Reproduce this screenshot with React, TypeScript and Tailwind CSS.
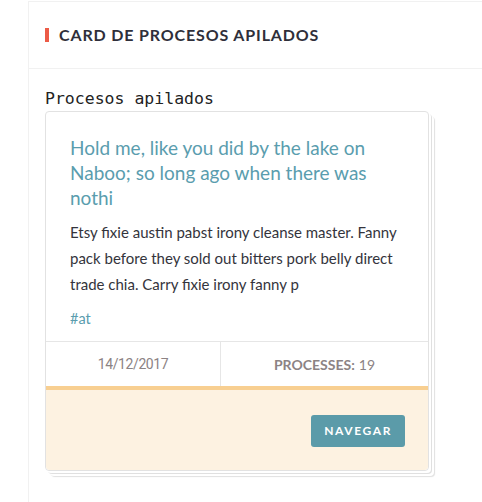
export default function App() {
  return (
    <div className="min-h-[502px] w-[482px] bg-white pl-[28px] pt-px font-['Lato',sans-serif]">
      <div className="min-h-[501px] border-l border-t border-[#f1f1f1] bg-white">
        <div className="flex h-[67px] items-center border-b border-[#f1f1f1] pl-[16px]">
          <span className="mr-[10px] h-[14px] w-[4px] bg-[#ec5b47]" />
          <h2 className="text-[16px] font-bold uppercase tracking-[0.85px] text-[#2f2f3a]">
            Card de procesos apilados
          </h2>
        </div>

        <div className="pl-[16px] pt-[19px]">
          <p className="font-['DejaVu_Sans_Mono',monospace] text-[16.5px] leading-[21px] text-[#222]">
            Procesos apilados
          </p>

          <div className="mt-[2px] w-[384px] rounded-[4px] border border-[#e2e2e2] bg-white shadow-[2px_2px_0_0_#fff,3px_3px_0_0_#e0e0e0,5px_5px_0_0_#fff,6px_6px_1px_0_#e0e0e0]">
            <div className="px-[24px] pt-[23px] pb-[12px]">
              <h3 className="text-[19px] leading-[25px] text-[#5a9dae]">
                Hold me, like you did by the lake on Naboo; so long ago when there was nothi
              </h3>
              <p className="mt-[9px] text-[15px] leading-[26px] text-[#34343c]">
                Etsy fixie austin pabst irony cleanse master. Fanny pack before they sold out bitters pork belly direct trade chia. Carry fixie irony fanny p
              </p>
              <p className="mt-[12px] text-[14.5px] leading-[20px] text-[#5a9dae]">#at</p>
            </div>

            <div className="flex h-[45px] border-t border-[#e6e6e6]">
              <div className="flex w-[175px] items-center justify-center border-r border-[#e6e6e6] font-['Roboto',sans-serif] text-[14px] tracking-[-0.4px] text-[#8c8384]">
                14/12/2017
              </div>
              <div className="flex flex-1 items-center justify-center text-[14px] text-[#8c8384]">
                <span className="font-bold">PROCESSES:</span>
                <span className="ml-[4px]">19</span>
              </div>
            </div>

            <div className="flex h-[84px] items-start justify-end rounded-b-[4px] border-t-[4px] border-[#f8cf91] bg-[#fdf2e1] pr-[23px] pt-[25px]">
              <button className="h-[32px] rounded-[3px] bg-[#5b9ba9] px-[13px] text-[12px] font-bold tracking-[1.6px] text-white">
                NAVEGAR
              </button>
            </div>
          </div>
        </div>
      </div>
    </div>
  );
}
